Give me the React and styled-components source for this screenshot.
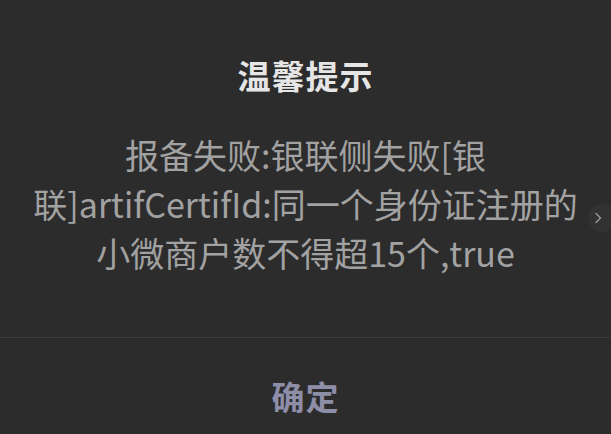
import React from "react";
import styled, { createGlobalStyle } from "styled-components";

const Global = createGlobalStyle`
  html, body { margin: 0; padding: 0; background: #2c2c2c; }
  body { font-family: "Noto Sans CJK SC", "Noto Sans", sans-serif; }
  #root { width: 611px; height: 434px; overflow: hidden; }
`;

const Dialog = styled.div`
  position: relative;
  width: 611px;
  height: 434px;
  background: #2c2c2c;
  display: flex;
  flex-direction: column;
  align-items: stretch;
`;

const Title = styled.h1`
  margin: 55px 0 0;
  font-size: 33px;
  line-height: 40px;
  font-weight: 700;
  color: #e6e6e6;
  text-align: center;
  letter-spacing: 1px;
`;

const Message = styled.div`
  margin-top: 35px;
  display: flex;
  flex-direction: column;
  align-items: center;
  font-size: 34px;
  line-height: 49px;
  color: #a2a2a2;
`;

const Line = styled.span`
  display: block;
  white-space: nowrap;
  text-align: center;
`;

const Divider = styled.div`
  margin-top: 60px;
  height: 1px;
  background: #3b3b3b;
`;

const Button = styled.button`
  flex: 1;
  border: none;
  background: transparent;
  font-family: inherit;
  font-size: 33px;
  font-weight: 700;
  color: #8f8ea8;
  display: flex;
  align-items: center;
  justify-content: center;
  padding: 20px 0 0;
  letter-spacing: 1px;
`;

const SideArrow = styled.div`
  position: absolute;
  left: 588px;
  top: 204px;
  width: 28px;
  height: 28px;
  border-radius: 50%;
  background: #323232;
  display: flex;
  align-items: center;
  justify-content: center;
`;

export default function App() {
  return (
    <>
      <Global />
      <Dialog>
        <Title>温馨提示</Title>
        <Message>
          <Line>报备失败:银联侧失败[银</Line>
          <Line>联]artifCertifId:同一个身份证注册的</Line>
          <Line>小微商户数不得超15个,true</Line>
        </Message>
        <Divider />
        <Button>确定</Button>
        <SideArrow>
          <svg width="10" height="12" viewBox="0 0 10 12" style={{ marginLeft: -8 }}>
            <path d="M3 1.5 L7.5 6 L3 10.5" fill="none" stroke="#9a9a9a" strokeWidth="1.4" strokeLinecap="round" strokeLinejoin="round" />
          </svg>
        </SideArrow>
      </Dialog>
    </>
  );
}
